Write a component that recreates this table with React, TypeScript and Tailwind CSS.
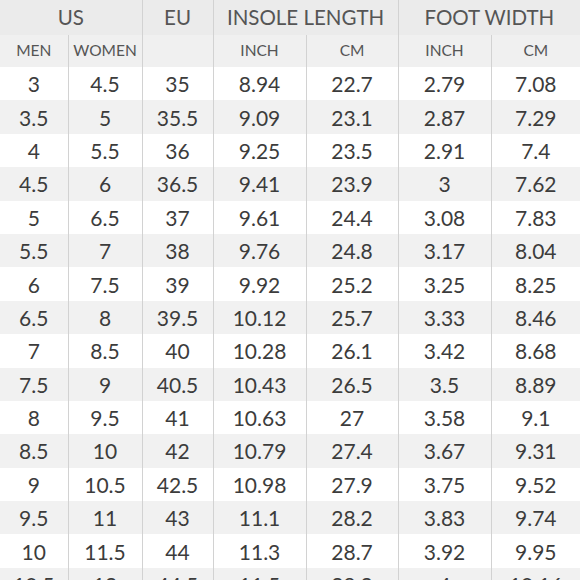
import React from 'react';

type Row = [string, string, string, string, string, string, string];

const rows: Row[] = [
  ['3', '4.5', '35', '8.94', '22.7', '2.79', '7.08'],
  ['3.5', '5', '35.5', '9.09', '23.1', '2.87', '7.29'],
  ['4', '5.5', '36', '9.25', '23.5', '2.91', '7.4'],
  ['4.5', '6', '36.5', '9.41', '23.9', '3', '7.62'],
  ['5', '6.5', '37', '9.61', '24.4', '3.08', '7.83'],
  ['5.5', '7', '38', '9.76', '24.8', '3.17', '8.04'],
  ['6', '7.5', '39', '9.92', '25.2', '3.25', '8.25'],
  ['6.5', '8', '39.5', '10.12', '25.7', '3.33', '8.46'],
  ['7', '8.5', '40', '10.28', '26.1', '3.42', '8.68'],
  ['7.5', '9', '40.5', '10.43', '26.5', '3.5', '8.89'],
  ['8', '9.5', '41', '10.63', '27', '3.58', '9.1'],
  ['8.5', '10', '42', '10.79', '27.4', '3.67', '9.31'],
  ['9', '10.5', '42.5', '10.98', '27.9', '3.75', '9.52'],
  ['9.5', '11', '43', '11.1', '28.2', '3.83', '9.74'],
  ['10', '11.5', '44', '11.3', '28.7', '3.92', '9.95'],
  ['10.5', '12', '44.5', '11.5', '29.2', '4', '10.16'],
];

const widths = ['68px', '74px', '71px', '93px', '92px', '93px', '89px'];

export default function App() {
  return (
    <div className="w-[580px] h-[580px] overflow-hidden bg-white" style={{ fontFamily: 'Lato, "Open Sans", sans-serif' }}>
      <table className="w-[580px] table-fixed border-collapse text-center">
        <colgroup>
          {widths.map((w, i) => (
            <col key={i} style={{ width: w }} />
          ))}
        </colgroup>
        <thead>
          <tr className="h-[35px] bg-[#ebebeb] text-[20.5px] text-[#555555]">
            <th colSpan={2} className="font-normal border-r border-[#d2d2d2]">US</th>
            <th className="font-normal border-r border-[#d2d2d2]">EU</th>
            <th colSpan={2} className="font-normal border-r border-[#d2d2d2]">INSOLE LENGTH</th>
            <th colSpan={2} className="font-normal">FOOT WIDTH</th>
          </tr>
          <tr className="h-[32px] bg-[#f0f0f0] text-[15.5px] text-[#555555]">
            <th className="font-normal border-r border-[#d2d2d2]">MEN</th>
            <th className="font-normal border-r border-[#d2d2d2]">WOMEN</th>
            <th className="font-normal border-r border-[#d2d2d2]"></th>
            <th className="font-normal border-r border-[#d2d2d2]">INCH</th>
            <th className="font-normal border-r border-[#d2d2d2]">CM</th>
            <th className="font-normal border-r border-[#d2d2d2]">INCH</th>
            <th className="font-normal">CM</th>
          </tr>
        </thead>
        <tbody className="text-[21px] text-[#3c3c3c]">
          {rows.map((r, i) => (
            <tr key={i} className={i % 2 === 1 ? 'h-[33.4px] bg-[#f1f1f1]' : 'h-[33.4px] bg-white'}>
              {r.map((c, j) => (
                <td key={j} className={j < 6 ? 'border-r border-[#d2d2d2] leading-none' : 'leading-none'}>
                  {c}
                </td>
              ))}
            </tr>
          ))}
        </tbody>
      </table>
    </div>
  );
}
